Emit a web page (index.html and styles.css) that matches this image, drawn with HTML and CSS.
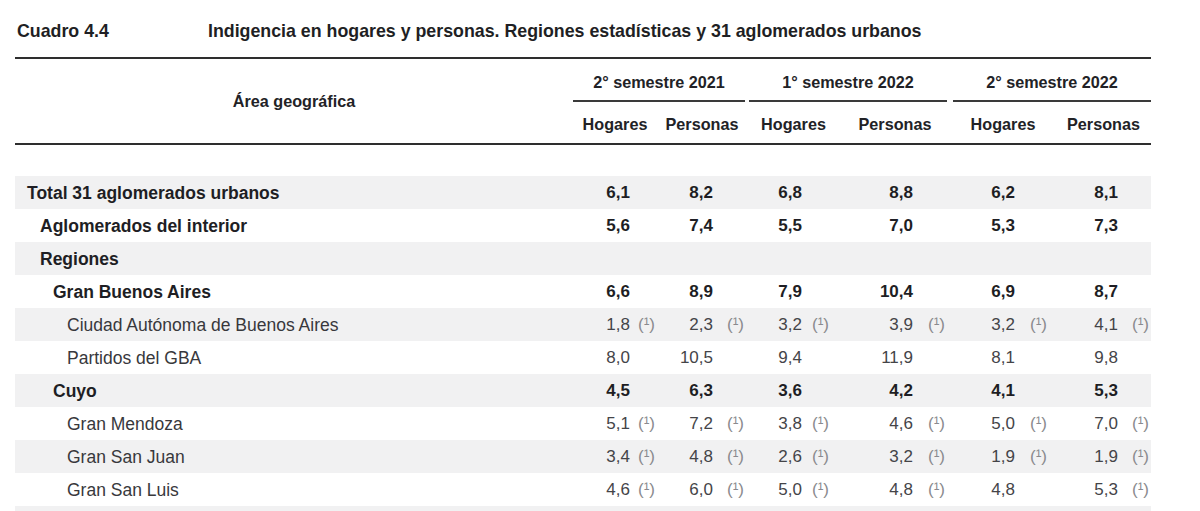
FILE: index.html
```html
<!DOCTYPE html>
<html lang="es">
<head>
<meta charset="utf-8">
<title>Cuadro 4.4</title>
<link rel="stylesheet" href="styles.css">
</head>
<body>
<div class="caption">
  <span class="cap-num">Cuadro 4.4</span>
  <span class="cap-title">Indigencia en hogares y personas. Regiones estadísticas y 31 aglomerados urbanos</span>
</div>
<table class="tbl">
  <colgroup>
    <col class="c-label"><col class="c1"><col class="c2"><col class="c3"><col class="c4"><col class="c5"><col class="c6">
  </colgroup>
  <thead>
    <tr class="h1">
      <th rowspan="2" class="area">Área geográfica</th>
      <th colspan="2" class="grp g1"><div class="grp-label">2° semestre 2021</div></th>
      <th colspan="2" class="grp g2"><div class="grp-label">1° semestre 2022</div></th>
      <th colspan="2" class="grp g3"><div class="grp-label">2° semestre 2022</div></th>
    </tr>
    <tr class="h2">
      <th>Hogares</th><th>Personas</th><th>Hogares</th><th>Personas</th><th>Hogares</th><th>Personas</th>
    </tr>
  </thead>
  <tbody>
    <tr class="spacer"><td colspan="7"></td></tr>
    <tr class="alt bold">
      <td class="lbl l0">Total 31 aglomerados urbanos</td>
      <td><span class="v">6,1</span></td><td><span class="v">8,2</span></td><td><span class="v">6,8</span></td><td><span class="v">8,8</span></td><td><span class="v">6,2</span></td><td><span class="v">8,1</span></td>
    </tr>
    <tr class="bold">
      <td class="lbl l1">Aglomerados del interior</td>
      <td><span class="v">5,6</span></td><td><span class="v">7,4</span></td><td><span class="v">5,5</span></td><td><span class="v">7,0</span></td><td><span class="v">5,3</span></td><td><span class="v">7,3</span></td>
    </tr>
    <tr class="alt bold">
      <td class="lbl l1">Regiones</td>
      <td></td><td></td><td></td><td></td><td></td><td></td>
    </tr>
    <tr class="bold">
      <td class="lbl l2">Gran Buenos Aires</td>
      <td><span class="v">6,6</span></td><td><span class="v">8,9</span></td><td><span class="v">7,9</span></td><td><span class="v">10,4</span></td><td><span class="v">6,9</span></td><td><span class="v">8,7</span></td>
    </tr>
    <tr class="alt">
      <td class="lbl l3">Ciudad Autónoma de Buenos Aires</td>
      <td><span class="v">1,8</span><span class="n">(¹)</span></td><td><span class="v">2,3</span><span class="n">(¹)</span></td><td><span class="v">3,2</span><span class="n">(¹)</span></td><td><span class="v">3,9</span><span class="n">(¹)</span></td><td><span class="v">3,2</span><span class="n">(¹)</span></td><td><span class="v">4,1</span><span class="n">(¹)</span></td>
    </tr>
    <tr>
      <td class="lbl l3">Partidos del GBA</td>
      <td><span class="v">8,0</span></td><td><span class="v">10,5</span></td><td><span class="v">9,4</span></td><td><span class="v">11,9</span></td><td><span class="v">8,1</span></td><td><span class="v">9,8</span></td>
    </tr>
    <tr class="alt bold">
      <td class="lbl l2">Cuyo</td>
      <td><span class="v">4,5</span></td><td><span class="v">6,3</span></td><td><span class="v">3,6</span></td><td><span class="v">4,2</span></td><td><span class="v">4,1</span></td><td><span class="v">5,3</span></td>
    </tr>
    <tr>
      <td class="lbl l3">Gran Mendoza</td>
      <td><span class="v">5,1</span><span class="n">(¹)</span></td><td><span class="v">7,2</span><span class="n">(¹)</span></td><td><span class="v">3,8</span><span class="n">(¹)</span></td><td><span class="v">4,6</span><span class="n">(¹)</span></td><td><span class="v">5,0</span><span class="n">(¹)</span></td><td><span class="v">7,0</span><span class="n">(¹)</span></td>
    </tr>
    <tr class="alt">
      <td class="lbl l3">Gran San Juan</td>
      <td><span class="v">3,4</span><span class="n">(¹)</span></td><td><span class="v">4,8</span><span class="n">(¹)</span></td><td><span class="v">2,6</span><span class="n">(¹)</span></td><td><span class="v">3,2</span><span class="n">(¹)</span></td><td><span class="v">1,9</span><span class="n">(¹)</span></td><td><span class="v">1,9</span><span class="n">(¹)</span></td>
    </tr>
    <tr>
      <td class="lbl l3">Gran San Luis</td>
      <td><span class="v">4,6</span><span class="n">(¹)</span></td><td><span class="v">6,0</span><span class="n">(¹)</span></td><td><span class="v">5,0</span><span class="n">(¹)</span></td><td><span class="v">4,8</span><span class="n">(¹)</span></td><td><span class="v">4,8</span></td><td><span class="v">5,3</span><span class="n">(¹)</span></td>
    </tr>
    <tr class="alt">
      <td class="lbl l2"></td>
      <td></td><td></td><td></td><td></td><td></td><td></td>
    </tr>
  </tbody>
</table>
</body>
</html>
```

FILE: styles.css
```css
html, body {
  margin: 0;
  padding: 0;
  background: #ffffff;
}

body {
  font-family: "Liberation Sans", Arial, sans-serif;
  color: #333333;
}

.caption {
  display: flex;
  align-items: center;
  height: 41px;
  padding: 21px 0 0 17px;
  box-sizing: border-box;
  font-family: "Liberation Sans", Arial, sans-serif;
  font-weight: bold;
  font-size: 17.8px;
  line-height: 20px;
  color: #1f1f24;
}

.cap-num {
  width: 191px;
  flex: none;
}

.tbl {
  margin: 16px 0 0 15px;
  width: 1136px;
  table-layout: fixed;
  border-collapse: separate;
  border-spacing: 0;
}

.c-label { width: 558px; }
.c1 { width: 84px; }
.c2 { width: 90px; }
.c3 { width: 93px; }
.c4 { width: 110px; }
.c5 { width: 106px; }
.c6 { width: 95px; }

.tbl th {
  font-family: "Liberation Sans", Arial, sans-serif;
  font-weight: bold;
  font-size: 16.2px;
  color: #222226;
  padding: 0;
  text-align: center;
  white-space: nowrap;
}

.h1 th {
  border-top: 2px solid #2e2e2e;
}

.area {
  vertical-align: middle;
  border-bottom: 2px solid #2e2e2e;
  padding-left: 4px;
}

.grp-label {
  padding: 12px 0 7px;
  line-height: 22px;
  border-bottom: 2px solid #3a3a3a;
}

.g1 .grp-label { margin-right: 2px; }
.g2 .grp-label { margin: 0 3px 0 2px; }
.g3 .grp-label { margin-left: 3px; }

.h2 th {
  padding: 11px 0 8px;
  line-height: 22px;
  border-bottom: 2px solid #2e2e2e;
}

.tbl td {
  height: 33px;
  padding: 0;
  font-size: 17px;
  line-height: 20px;
  color: #444448;
  white-space: nowrap;
  vertical-align: middle;
}

.tbl .spacer td {
  height: 31px;
  line-height: 0;
  font-size: 0;
}

.alt td {
  background: #f1f1f2;
}

.tbl td.lbl {
  font-size: 17.5px;
  color: #38383c;
}

.bold td,
.bold td.lbl {
  font-weight: bold;
  color: #1e1e24;
}

.l0 { padding-left: 12px !important; }
.l1 { padding-left: 25px !important; }
.l2 { padding-left: 38px !important; }
.l3 { padding-left: 52px !important; }

.v {
  display: inline-block;
  width: var(--r);
  text-align: right;
}

.n {
  margin-left: var(--g);
  color: #8a8a8e;
}

tr > td:nth-child(2) { --r: 57px; --g: 8px; }
tr > td:nth-child(3) { --r: 56px; --g: 14px; }
tr > td:nth-child(4) { --r: 55px; --g: 10px; }
tr > td:nth-child(5) { --r: 73px; --g: 15px; }
tr > td:nth-child(6) { --r: 65px; --g: 15px; }
tr > td:nth-child(7) { --r: 62px; --g: 14px; }
```
